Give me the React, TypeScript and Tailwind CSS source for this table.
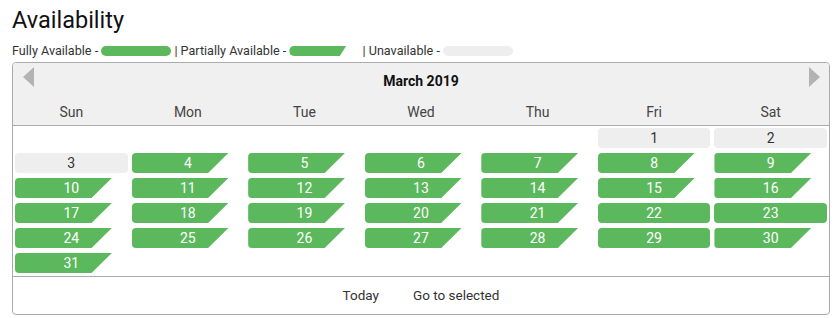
import React from "react";

type Status = "full" | "partial" | "none";

const GREEN = "bg-[#5cb85c]";

// March 2019 starts on a Friday
const days: { d: number; s: Status }[] = Array.from({ length: 31 }, (_, i) => {
  const d = i + 1;
  let s: Status = "partial";
  if (d <= 3) s = "none";
  if (d === 22 || d === 23 || d === 29) s = "full";
  return { d, s };
});

const weekdays = ["Sun", "Mon", "Tue", "Wed", "Thu", "Fri", "Sat"];

function DayCell({ d, s }: { d: number; s: Status }) {
  if (s === "none") {
    return (
      <div className="mx-[2px] h-[20px] rounded-[4px] bg-[#eeeeee] text-[#333] text-[14px] leading-[20px] text-center">
        {d}
      </div>
    );
  }
  return (
    <div
      className={`mx-[2px] h-[20px] rounded-[4px] ${GREEN} text-white text-[14px] leading-[20px] text-center`}
      style={
        s === "partial"
          ? { clipPath: "polygon(0 0, 86% 0, 68% 100%, 0 100%)" }
          : undefined
      }
    >
      {d}
    </div>
  );
}

export default function App() {
  const cells: (null | { d: number; s: Status })[] = [
    null, null, null, null, null,
    ...days,
  ];

  return (
    <div
      className="w-[835px] h-[318px] bg-white text-[#333] pl-[12px] pt-[4px]"
      style={{ fontFamily: "Roboto, 'Noto Sans', sans-serif" }}
    >
      <h1 className="text-[23.5px] leading-[32px] text-[#111]">Availability</h1>

      <div className="flex items-center h-[14px] mt-[8px] text-[12.6px] leading-[14px] text-[#333]">
        <span>Fully Available -&nbsp;</span>
        <span className={`inline-block w-[70px] h-[10px] rounded-full ${GREEN}`} />
        <span>&nbsp;| Partially Available -&nbsp;</span>
        <span
          className={`inline-block w-[70px] h-[10px] rounded-full ${GREEN}`}
          style={{ clipPath: "polygon(0 0, 81% 0, 72% 100%, 0 100%)" }}
        />
        <span>&nbsp;| Unavailable -&nbsp;</span>
        <span className="inline-block w-[70px] h-[10px] rounded-full bg-[#eeeeee]" />
      </div>

      <div className="mt-[4px] w-[818px] h-[253px] border border-[#aaaaaa] rounded-[4px] overflow-hidden flex flex-col">
        <div className="bg-[#f0f0f0] border-b border-[#aaaaaa] h-[63px]">
          <div className="relative h-[36px] flex items-center justify-center">
            <svg
              className="absolute left-[10px] top-[4px]"
              width="11"
              height="20"
              viewBox="0 0 11 20"
            >
              <polygon points="11,0 0,10 11,20" fill="#b3b3b3" />
            </svg>
            <span className="font-bold text-[14px] text-[#111]">March 2019</span>
            <svg
              className="absolute right-[9px] top-[4px]"
              width="11"
              height="20"
              viewBox="0 0 11 20"
            >
              <polygon points="0,0 11,10 0,20" fill="#b3b3b3" />
            </svg>
          </div>
          <div className="grid grid-cols-7 h-[26px] items-center">
            {weekdays.map((w) => (
              <div key={w} className="text-center text-[14px] text-[#444]">
                {w}
              </div>
            ))}
          </div>
        </div>

        <div className="grid grid-cols-7 gap-y-[5px] pt-[2px] h-[151px] content-start border-b border-[#aaaaaa]">
          {cells.map((c, i) =>
            c ? <DayCell key={i} d={c.d} s={c.s} /> : <div key={i} className="h-[20px]" />
          )}
        </div>

        <div className="flex-1 flex items-center justify-center gap-[34px] text-[13.5px] text-[#333]">
          <span>Today</span>
          <span>Go to selected</span>
        </div>
      </div>
    </div>
  );
}
